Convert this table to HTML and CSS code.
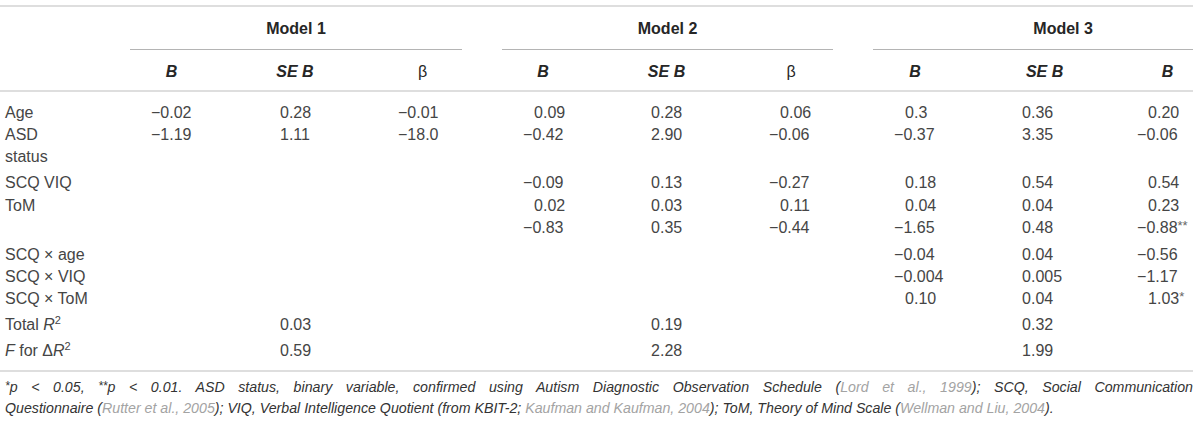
FILE: index.html
```html
<!DOCTYPE html>
<html lang="en">
<head>
<meta charset="utf-8">
<title>Regression table</title>
<link rel="stylesheet" href="styles.css">
</head>
<body>
<div class="page">
  <div class="tbl-wrap">
    <table class="tbl">
      <colgroup>
        <col class="w130">
        <col class="w83">
        <col class="w164">
        <col class="w85">
        <col class="w40">
        <col class="w82">
        <col class="w165">
        <col class="w84">
        <col class="w40">
        <col class="w84">
        <col class="w175">
        <col class="w61">
      </colgroup>
      <thead>
        <tr class="h1">
          <th></th>
          <th colspan="3" class="model">Model 1</th>
          <th></th>
          <th colspan="3" class="model">Model 2</th>
          <th></th>
          <th colspan="3" class="model m3">Model 3</th>
        </tr>
        <tr class="h2">
          <th></th>
          <th class="bi">B</th>
          <th class="bi">SE B</th>
          <th class="beta1">β</th>
          <th></th>
          <th class="bi">B</th>
          <th class="bi">SE B</th>
          <th>β</th>
          <th></th>
          <th class="bi">B</th>
          <th class="bi">SE B</th>
          <th class="bi last">B</th>
        </tr>
      </thead>
      <tbody>
        <tr class="first">
          <td class="lab">Age</td>
          <td class="b">−0.02</td><td class="se">0.28</td><td class="b">−0.01</td>
          <td></td>
          <td class="b"><span class="pos">0.09</span></td><td class="se">0.28</td><td class="b2"><span class="pos">0.06</span></td>
          <td></td>
          <td class="b"><span class="pos">0.3</span></td><td class="se3">0.36</td><td class="bl"><span class="pos">0.20</span></td>
        </tr>
        <tr>
          <td class="lab">ASD<br>status</td>
          <td class="b">−1.19</td><td class="se">1.11</td><td class="b">−18.0</td>
          <td></td>
          <td class="b">−0.42</td><td class="se">2.90</td><td class="b2">−0.06</td>
          <td></td>
          <td class="b">−0.37</td><td class="se3">3.35</td><td class="bl">−0.06</td>
        </tr>
        <tr class="sp4">
          <td class="lab">SCQ VIQ</td>
          <td></td><td></td><td></td>
          <td></td>
          <td class="b">−0.09</td><td class="se">0.13</td><td class="b2">−0.27</td>
          <td></td>
          <td class="b"><span class="pos">0.18</span></td><td class="se3">0.54</td><td class="bl"><span class="pos">0.54</span></td>
        </tr>
        <tr class="sp1">
          <td class="lab">ToM</td>
          <td></td><td></td><td></td>
          <td></td>
          <td class="b"><span class="pos">0.02</span></td><td class="se">0.03</td><td class="b2"><span class="pos">0.11</span></td>
          <td></td>
          <td class="b"><span class="pos">0.04</span></td><td class="se3">0.04</td><td class="bl"><span class="pos">0.23</span></td>
        </tr>
        <tr>
          <td class="lab"></td>
          <td></td><td></td><td></td>
          <td></td>
          <td class="b">−0.83</td><td class="se">0.35</td><td class="b2">−0.44</td>
          <td></td>
          <td class="b">−1.65</td><td class="se3">0.48</td><td class="bl">−0.88<sup class="star">**</sup></td>
        </tr>
        <tr class="sp5">
          <td class="lab">SCQ × age</td>
          <td></td><td></td><td></td>
          <td></td>
          <td></td><td></td><td></td>
          <td></td>
          <td class="b">−0.04</td><td class="se3">0.04</td><td class="bl">−0.56</td>
        </tr>
        <tr>
          <td class="lab">SCQ × VIQ</td>
          <td></td><td></td><td></td>
          <td></td>
          <td></td><td></td><td></td>
          <td></td>
          <td class="b">−0.004</td><td class="se3">0.005</td><td class="bl">−1.17</td>
        </tr>
        <tr>
          <td class="lab">SCQ × ToM</td>
          <td></td><td></td><td></td>
          <td></td>
          <td></td><td></td><td></td>
          <td></td>
          <td class="b"><span class="pos">0.10</span></td><td class="se3">0.04</td><td class="bl"><span class="pos">1.03<sup class="star">*</sup></span></td>
        </tr>
        <tr class="sp4">
          <td class="lab">Total <i>R</i><sup class="sq">2</sup></td>
          <td></td><td class="se">0.03</td><td></td>
          <td></td>
          <td></td><td class="se">0.19</td><td></td>
          <td></td>
          <td></td><td class="se3">0.32</td><td></td>
        </tr>
        <tr class="sp4 lastrow">
          <td class="lab"><i>F</i> for Δ<i>R</i><sup class="sq">2</sup></td>
          <td></td><td class="se">0.59</td><td></td>
          <td></td>
          <td></td><td class="se">2.28</td><td></td>
          <td></td>
          <td></td><td class="se3">1.99</td><td></td>
        </tr>
      </tbody>
    </table>
  </div>
  <p class="note">
    <span class="l1"><sup class="nstar">*</sup>p &lt; 0.05, <sup class="nstar">**</sup>p &lt; 0.01. ASD status, binary variable, confirmed using Autism Diagnostic Observation Schedule (<span class="ref">Lord et al., 1999</span>); SCQ, Social Communication</span>
    <span class="l2">Questionnaire (<span class="ref">Rutter et al., 2005</span>); VIQ, Verbal Intelligence Quotient (from KBIT-2; <span class="ref">Kaufman and Kaufman, 2004</span>); ToM, Theory of Mind Scale (<span class="ref">Wellman and Liu, 2004</span>).</span>
  </p>
</div>
</body>
</html>
```

FILE: styles.css
```css
* { box-sizing: border-box; }

body {
  margin: 0;
  background: #ffffff;
  font-family: "Liberation Sans", Arial, sans-serif;
  color: #454545;
}

.page {
  width: 1200px;
  padding-top: 5px;
}

.tbl-wrap {
  width: 1193px;
  border-top: 2px solid #dedede;
  border-bottom: 2px solid #dedede;
}

.tbl {
  width: 1193px;
  table-layout: fixed;
  border-collapse: separate;
  border-spacing: 0;
  font-size: 16px;
  line-height: 22px;
}

.w130 { width: 130px; }
.w83 { width: 83px; }
.w164 { width: 164px; }
.w85 { width: 85px; }
.w40 { width: 40px; }
.w82 { width: 82px; }
.w165 { width: 165px; }
.w84 { width: 84px; }
.w175 { width: 175px; }
.w61 { width: 61px; }

.tbl th,
.tbl td {
  padding: 0;
  text-align: left;
  vertical-align: top;
  font-weight: normal;
  white-space: nowrap;
}

.h1 th {
  padding-top: 11px;
  padding-bottom: 9px;
  border-bottom: 1px solid transparent;
  font-weight: bold;
  text-align: center;
  color: #262626;
}
.h1 th.model { border-bottom-color: #b4b4b4; }
.h1 th.m3 { padding-left: 60px; }

.h2 th {
  padding-top: 11px;
  padding-bottom: 7px;
  border-bottom: 2px solid #dedede;
  text-align: center;
  color: #262626;
}
.h2 th.bi { font-weight: bold; font-style: italic; }
.h2 th.beta1 { padding-left: 6px; }
.h2 th.last { padding-left: 10px; }

tbody tr.first td { padding-top: 10px; }
tbody tr.sp1 td { padding-top: 1px; }
tbody tr.sp4 td { padding-top: 4px; }
tbody tr.sp5 td { padding-top: 5px; }
tbody tr.lastrow td { padding-bottom: 8px; }

.tbl td.lab { padding-left: 5px; }
.tbl td.b { padding-left: 21px; }
.tbl td.b2 { padding-left: 20px; }
.tbl td.se { padding-left: 67px; }
.tbl td.se3 { padding-left: 65px; }
.tbl td.bl { padding-left: 5px; }

.pos { padding-left: 11px; }

.star {
  font-size: 13px;
  line-height: 0;
  vertical-align: 3px;
  color: #666666;
}
.sq {
  font-size: 11px;
  line-height: 0;
  vertical-align: super;
}

.note {
  margin: 0;
  width: 1193px;
  padding: 5px 0 0 5px;
  font-size: 14.2px;
  line-height: 21px;
  font-style: italic;
  color: #333333;
}
.note .l1 {
  display: block;
  text-align: justify;
  text-align-last: justify;
}
.note .l2 {
  display: block;
  text-align: left;
}
.note .ref { color: #a3a3a3; }
.nstar {
  font-size: 12px;
  line-height: 0;
  vertical-align: 2px;
}
```
